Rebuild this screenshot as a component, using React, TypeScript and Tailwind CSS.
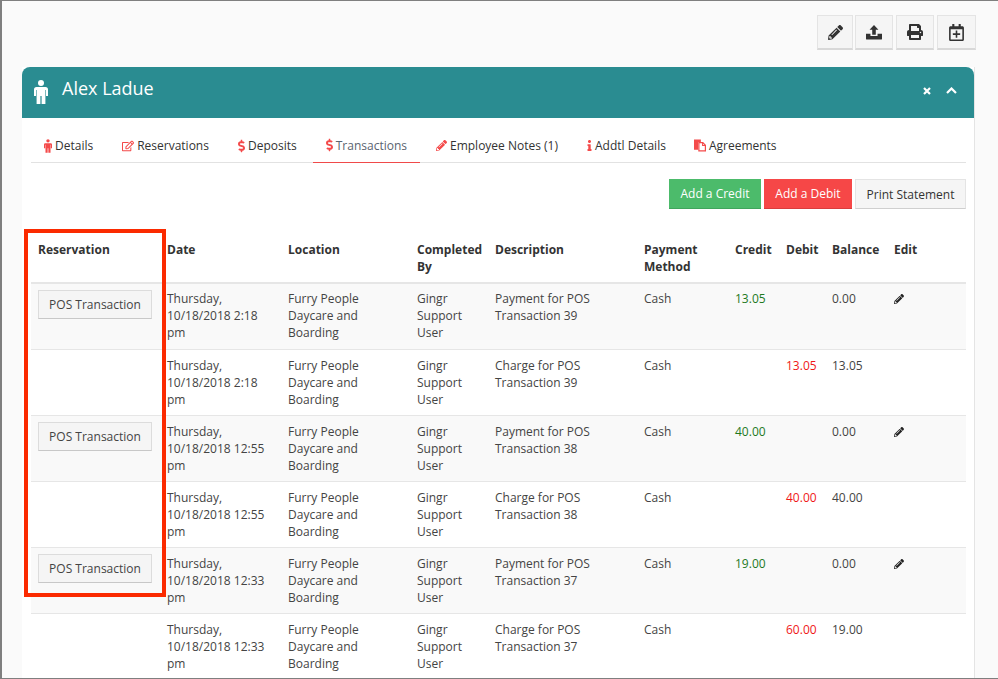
import type { ReactNode } from 'react';
import {
  FaPencilAlt,
  FaPrint,
  FaRegEdit,
  FaDollarSign,
  FaInfo,
  FaRegCalendarPlus,
} from 'react-icons/fa';

interface Row {
  date: string;
  time: string;
  desc: string;
  txn: string;
  credit?: string;
  debit?: string;
  balance: string;
  pos?: boolean;
}

const rows: Row[] = [
  { date: 'Thursday,', time: '10/18/2018 2:18', desc: 'Payment for POS', txn: 'Transaction 39', credit: '13.05', balance: '0.00', pos: true },
  { date: 'Thursday,', time: '10/18/2018 2:18', desc: 'Charge for POS', txn: 'Transaction 39', debit: '13.05', balance: '13.05' },
  { date: 'Thursday,', time: '10/18/2018 12:55', desc: 'Payment for POS', txn: 'Transaction 38', credit: '40.00', balance: '0.00', pos: true },
  { date: 'Thursday,', time: '10/18/2018 12:55', desc: 'Charge for POS', txn: 'Transaction 38', debit: '40.00', balance: '40.00' },
  { date: 'Thursday,', time: '10/18/2018 12:33', desc: 'Payment for POS', txn: 'Transaction 37', credit: '19.00', balance: '0.00', pos: true },
  { date: 'Thursday,', time: '10/18/2018 12:33', desc: 'Charge for POS', txn: 'Transaction 37', debit: '60.00', balance: '19.00' },
];

// Stocky standing figure used in the header and the Details tab
function PersonIcon({ className }: { className: string }) {
  return (
    <svg viewBox="0 0 14 24" className={className} fill="currentColor">
      <circle cx="7" cy="3" r="3" />
      <path d="M2.5 7h9A2.5 2.5 0 0 1 14 9.5V16h-2v-6h-.6v14H7.6v-8H6.4v8H2.6V10H2v6H0V9.5A2.5 2.5 0 0 1 2.5 7z" />
    </svg>
  );
}

function UploadIcon({ className }: { className: string }) {
  return (
    <svg viewBox="0 0 18 18" className={className} fill="currentColor">
      <path d="M9 1l5 5.500h-3V12H7V6.500H4z" />
      <path d="M0 11h5v2.500h8V11h5v5.500a1 1 0 0 1-1 1H1a1 1 0 0 1-1-1z" />
    </svg>
  );
}

function DocsIcon({ className }: { className: string }) {
  return (
    <svg viewBox="0 0 14 14" className={className}>
      <path d="M0 0h8v3H5v9H0z" fill="currentColor" />
      <path d="M5.700 3.700h4.600l3 3v6.600H5.700z" fill="#fff" stroke="currentColor" strokeWidth="1.400" />
      <path d="M10 3.500v3.500h3.500" fill="none" stroke="currentColor" strokeWidth="1.200" />
    </svg>
  );
}

const tabs: { label: string; icon: ReactNode; active?: boolean }[] = [
  { label: 'Details', icon: <PersonIcon className="w-[8px] h-[14px]" /> },
  { label: 'Reservations', icon: <FaRegEdit className="w-[12px] h-[12px]" /> },
  { label: 'Deposits', icon: <FaDollarSign className="w-[7px] h-[14px]" /> },
  { label: 'Transactions', icon: <FaDollarSign className="w-[7px] h-[14px]" />, active: true },
  { label: 'Employee Notes (1)', icon: <FaPencilAlt className="w-[11px] h-[11px]" /> },
  { label: 'Addtl Details', icon: <FaInfo className="w-[5px] h-[11px]" /> },
  { label: 'Agreements', icon: <DocsIcon className="w-[12px] h-[13px] -ml-[1px]" /> },
];

function TopButton({ width, children }: { width: string; children: ReactNode }) {
  return (
    <button className={`${width} h-[35px] flex items-center justify-center bg-[#f5f5f5] border border-[#e4e4e4] border-b-2 border-b-[#d8d8d8] text-[#333]`}>
      {children}
    </button>
  );
}

export default function App() {
  return (
    <div className="relative h-[679px] w-[998px] overflow-hidden bg-[#fafafa] border-l-2 border-t border-b border-[#7f7f7f] font-['Open_Sans',sans-serif] text-[12px] leading-[17px] text-[#444]">
      {/* Top actions */}
      <div className="flex justify-end gap-[2px] pt-[14px] pr-[22px]">
        <TopButton width="w-[36px]"><FaPencilAlt className="w-[15px] h-[15px]" /></TopButton>
        <TopButton width="w-[38px]"><UploadIcon className="w-[16px] h-[16px]" /></TopButton>
        <TopButton width="w-[38px] ml-[1px]"><FaPrint className="w-[16px] h-[16px]" /></TopButton>
        <TopButton width="w-[39px] ml-[1px]"><FaRegCalendarPlus className="w-[15px] h-[17px]" /></TopButton>
      </div>

      {/* Panel */}
      <div className="ml-[20px] mt-[17px] w-[953px] bg-white border-r border-[#e4e4e4]">
        <div className="h-[51px] bg-[#2a8c91] rounded-t-[8px] flex items-center text-white pl-[12px] pr-[17px]">
          <PersonIcon className="w-[14px] h-[24px] mt-[-1px]" />
          <span className="ml-[14px] text-[18px] leading-[24px] font-medium -mt-[9px]">Alex Ladue</span>
          <div className="ml-auto flex items-center gap-[15px] -mt-[4px]">
            <svg viewBox="0 0 8 8" className="w-[8px] h-[8px]" fill="none" stroke="currentColor" strokeWidth="2.200">
              <path d="M1 1l6 6M7 1L1 7" />
            </svg>
            <svg viewBox="0 0 11 7" className="w-[11px] h-[7px]" fill="none" stroke="currentColor" strokeWidth="2.200">
              <path d="M1 6l4.500-4.500L10 6" />
            </svg>
          </div>
        </div>

        <div className="pl-[9px] pr-[8px]">
          {/* Tabs */}
          <div className="flex gap-[3px] pt-[10px] border-b border-[#e2e2e2] h-[45px]">
            {tabs.map((tab) => (
              <div
                key={tab.label}
                className={`h-[35px] px-[13px] flex items-center gap-[3px] whitespace-nowrap ${tab.active ? 'border-b border-[#f04a4a] text-[#5a6470]' : 'text-[#333]'}`}
              >
                <span className="text-[#f44a4a] flex items-center">{tab.icon}</span>
                {tab.label}
              </div>
            ))}
          </div>

          {/* Actions */}
          <div className="flex justify-end gap-[3px] pt-[16px]">
            <button className="w-[92px] h-[30px] bg-[#4cbb6b] border-b border-[#3fa55c] text-white">Add a Credit</button>
            <button className="w-[88px] h-[30px] bg-[#f64747] border-b border-[#d93c3c] text-white">Add a Debit</button>
            <button className="w-[111px] h-[30px] bg-[#f5f5f5] border border-[#e4e4e4] border-b-[#cfcfcf] text-[#333]">Print Statement</button>
          </div>

          {/* Transactions table */}
          <table className="mt-[20px] w-[935px] table-fixed border-collapse text-left">
            <colgroup>
              <col className="w-[136px]" />
              <col className="w-[121px]" />
              <col className="w-[129px]" />
              <col className="w-[78px]" />
              <col className="w-[149px]" />
              <col className="w-[91px]" />
              <col className="w-[51px]" />
              <col className="w-[46px]" />
              <col className="w-[62px]" />
              <col className="w-[72px]" />
            </colgroup>
            <thead>
              <tr className="h-[54px] border-b-2 border-[#e6e6e6] align-top text-[#333]">
                <th className="pl-[7px] pt-[12px] font-bold">Reservation</th>
                <th className="pt-[12px] font-bold">Date</th>
                <th className="pt-[12px] font-bold">Location</th>
                <th className="pt-[12px] font-bold">Completed By</th>
                <th className="pt-[12px] font-bold">Description</th>
                <th className="pt-[12px] font-bold">Payment Method</th>
                <th className="pt-[12px] font-bold">Credit</th>
                <th className="pt-[12px] font-bold">Debit</th>
                <th className="pt-[12px] font-bold">Balance</th>
                <th className="pt-[12px] font-bold">Edit</th>
              </tr>
            </thead>
            <tbody>
              {rows.map((row, i) => {
                // first row sits a pixel higher in the reference
                const cell = i === 0 ? 'pt-[6px]' : 'pt-[7px]';
                return (
                  <tr key={i} className={`h-[66px] align-top border-b border-[#e6e6e6] ${i % 2 === 0 ? 'bg-[#f9f9f9]' : 'bg-white'}`}>
                    <td className="pl-[7px] pt-[6px]">
                      {row.pos && (
                        <button className="w-[114px] h-[29px] bg-[#f5f5f5] border border-[#dcdcdc] border-b-[#c8c8c8] text-[#444]">POS Transaction</button>
                      )}
                    </td>
                    <td className={cell}>{row.date}<br />{row.time}<br />pm</td>
                    <td className={cell}>Furry People<br />Daycare and<br />Boarding</td>
                    <td className={cell}>Gingr<br />Support<br />User</td>
                    <td className={cell}>{row.desc}<br />{row.txn}</td>
                    <td className={cell}>Cash</td>
                    <td className={`${cell} text-[#1f7a1f]`}>{row.credit}</td>
                    <td className={`${cell} text-[#f01818]`}>{row.debit}</td>
                    <td className={cell}>{row.balance}</td>
                    <td className={cell}>
                      {row.pos && <FaPencilAlt className="w-[10px] h-[10px] mt-[4px] text-[#222]" />}
                    </td>
                  </tr>
                );
              })}
            </tbody>
          </table>
        </div>
      </div>

      {/* Highlight drawn over the screenshot */}
      <div className="absolute left-[22px] top-[228px] w-[142px] h-[368px] border-[4px] border-[#fb2a00]" />
    </div>
  );
}
